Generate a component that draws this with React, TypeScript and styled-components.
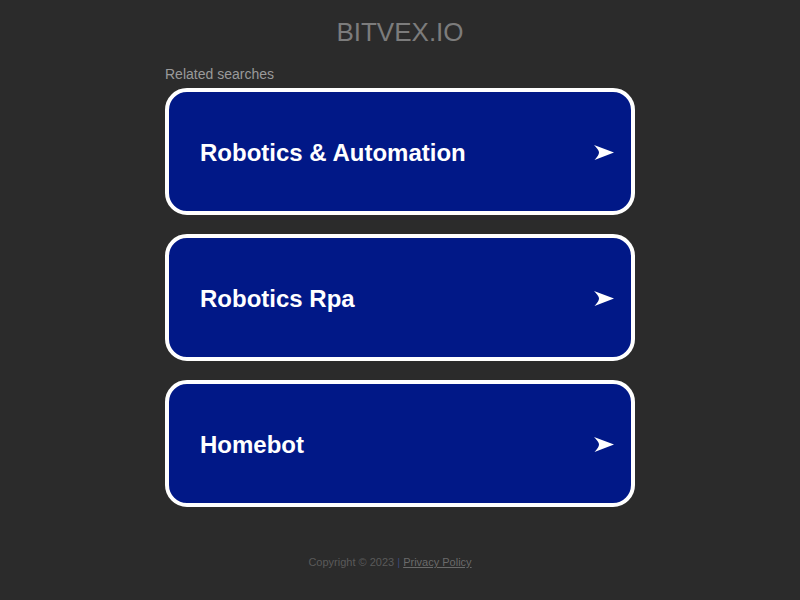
import styled, { createGlobalStyle } from "styled-components";

const Global = createGlobalStyle`
  html, body {
    margin: 0;
    padding: 0;
    background: #2b2b2b;
    font-family: "Liberation Sans", Arial, sans-serif;
  }
`;

const Page = styled.div`
  width: 800px;
  min-height: 600px;
  display: flex;
  flex-direction: column;
  align-items: center;
`;

const Logo = styled.h1`
  margin: 17px 0 0;
  font-size: 26px;
  font-weight: 400;
  line-height: 30px;
  color: #7c7c7c;
`;

const Block = styled.div`
  width: 470px;
  margin-top: 19px;
  display: flex;
  flex-direction: column;
`;

const Label = styled.div`
  font-size: 14px;
  line-height: 16px;
  color: #9a9a9a;
  margin-bottom: 6px;
`;

const List = styled.div`
  display: flex;
  flex-direction: column;
  gap: 19px;
`;

const Card = styled.a`
  box-sizing: border-box;
  height: 127px;
  border: 4px solid #ffffff;
  border-radius: 22px;
  background: #011887;
  display: flex;
  align-items: center;
  justify-content: space-between;
  padding: 2px 17px 0 31px;
  color: #ffffff;
  text-decoration: none;
`;

const CardText = styled.span`
  font-size: 24px;
  font-weight: 700;
  line-height: 28px;
`;

const Arrow = styled.svg`
  width: 20px;
  height: 15px;
  flex-shrink: 0;
`;

const Footer = styled.footer`
  margin-top: 49px;
  padding-right: 20px;
  font-size: 11px;
  color: #5a5a5a;
`;

const Sep = styled.span`
  color: #3b4a7a;
`;

const FooterLink = styled.a`
  color: #6a6a6a;
  text-decoration: underline;
`;

const items = ["Robotics & Automation", "Robotics Rpa", "Homebot"];

export default function App() {
  return (
    <Page>
      <Global />
      <Logo>BITVEX.IO</Logo>
      <Block>
        <Label>Related searches</Label>
        <List>
          {items.map((item) => (
            <Card key={item} href="#">
              <CardText>{item}</CardText>
              <Arrow viewBox="0 0 20 15">
                <path d="M0 0 L20 7.5 L0.5 15 Q5 10 5 7.5 Q5 5 0 0 Z" fill="#ffffff" />
              </Arrow>
            </Card>
          ))}
        </List>
      </Block>
      <Footer>
        Copyright © 2023 <Sep>|</Sep> <FooterLink href="#">Privacy Policy</FooterLink>
      </Footer>
    </Page>
  );
}
